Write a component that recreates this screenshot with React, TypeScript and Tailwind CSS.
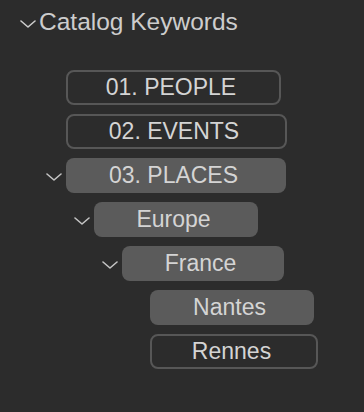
import type { ReactNode } from "react";

type Keyword = {
  label: string;
  indent: string;
  width: string;
  filled: boolean;
  open: boolean;
};

const KEYWORDS: Keyword[] = [
  { label: "01. PEOPLE", indent: "pl-[46px]", width: "w-[215px]", filled: false, open: false },
  { label: "02. EVENTS", indent: "pl-[46px]", width: "w-[221px]", filled: false, open: false },
  { label: "03. PLACES", indent: "pl-[46px]", width: "w-[220px]", filled: true, open: true },
  { label: "Europe", indent: "pl-[74px]", width: "w-[164px]", filled: true, open: true },
  { label: "France", indent: "pl-[102px]", width: "w-[162px]", filled: true, open: true },
  { label: "Nantes", indent: "pl-[130px]", width: "w-[164px]", filled: true, open: false },
  { label: "Rennes", indent: "pl-[130px]", width: "w-[168px]", filled: false, open: false },
];

function Chevron({ className }: { className?: string }) {
  return (
    <svg viewBox="0 0 16 8" className={className} fill="none" stroke="currentColor" strokeWidth={1.6} strokeLinecap="round" strokeLinejoin="round" aria-hidden>
      <polyline points="1,1 8,7 15,1" />
    </svg>
  );
}

function Pill({ k }: { k: Keyword }): ReactNode {
  const look = k.filled ? "bg-[#5b5b5b]" : "border-2 border-[#575757]";
  return (
    <div className={`${k.width} ${look} h-[35px] rounded-[8px] flex items-center justify-center pr-[5px] text-[23px] leading-none text-[#d4d4d4]`}>
      {k.label}
    </div>
  );
}

export default function App() {
  return (
    <div className="w-[364px] h-[412px] bg-[#2c2c2c] font-['Liberation_Sans',Arial,sans-serif] overflow-hidden">
      <div className="flex items-center h-[28px] mt-[8px] pl-[20px] gap-[3px] text-[#cdcdcd]">
        <Chevron className="w-[16px] h-[8px] mt-[3px]" />
        <span className="text-[24.5px] leading-none">Catalog Keywords</span>
      </div>

      <div className="flex flex-col gap-[9px] mt-[34px]">
        {KEYWORDS.map((k) => (
          <div key={k.label} className={`flex items-center ${k.indent}`}>
            <div className="w-[20px] shrink-0 flex items-center text-[#c4c4c4]">
              {k.open && <Chevron className="w-[16px] h-[8px] mt-[2px]" />}
            </div>
            <Pill k={k} />
          </div>
        ))}
      </div>
    </div>
  );
}
